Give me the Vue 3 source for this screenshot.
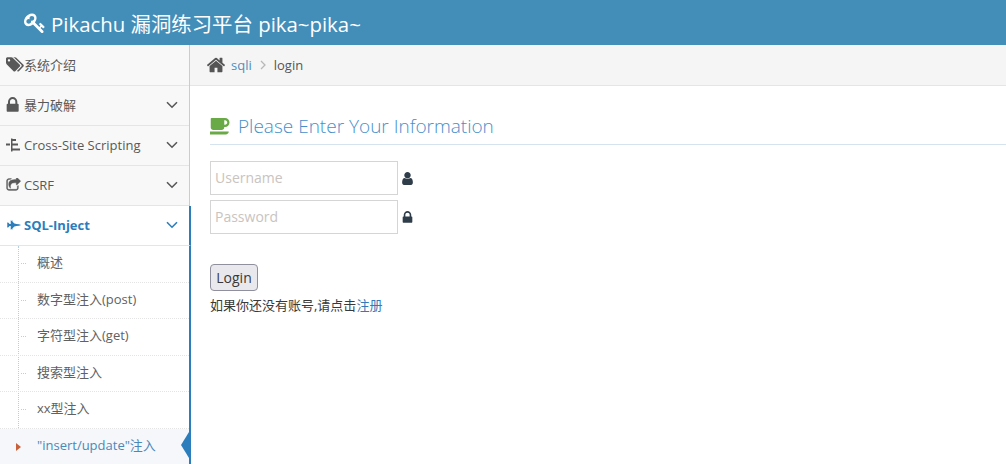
<template>
  <div class="page">
    <header class="navbar">
      <svg class="navbar-key" viewBox="0 0 1792 1792"><path :d="icons.key" /></svg>
      <span>Pikachu 漏洞练习平台 pika~pika~</span>
    </header>
    <div class="main">
      <aside class="sidebar">
        <div v-for="item in menu" :key="item.text" class="menu-item" :class="{ 'menu-item--open': item.open }">
          <svg v-if="item.icon === 'xss'" class="menu-icon" viewBox="0 0 18 14" preserveAspectRatio="xMinYMid">
            <path d="M0 5.500h4v2H0zM5 .5h1.500v13H5zM6.500 1h3.500v2H6.500zM6.500 5.500h5.500v2H6.500zM6.500 10.500h7.500v2H6.500z" />
          </svg>
          <svg v-else class="menu-icon" :class="`menu-icon--${item.icon}`" :viewBox="item.box" preserveAspectRatio="xMinYMid"><path :d="icons[item.icon]" /></svg>
          <span class="menu-text">{{ item.text }}</span>
          <svg v-if="item.arrow" class="menu-arrow" viewBox="0 0 12 8"><path d="M1 1.2l5 5 5-5" /></svg>
        </div>
        <ul class="submenu">
          <li v-for="sub in submenu" :key="sub.text" :class="{ active: sub.active }">{{ sub.text }}</li>
        </ul>
      </aside>
      <main class="content">
        <div class="breadcrumbs">
          <svg class="home-icon" viewBox="0 0 1792 1792"><path :d="icons.home" /></svg>
          <a class="crumb-link">sqli</a>
          <svg class="crumb-sep" viewBox="0 0 6 10"><path d="M1 1l4 4-4 4" /></svg>
          <span>login</span>
        </div>
        <div class="page-body">
          <h4 class="form-title">
            <svg class="coffee-icon" viewBox="0 0 2048 1792"><path :d="icons.coffee" /></svg>
            <span>Please Enter Your Information</span>
          </h4>
          <form class="login-form" @submit.prevent>
            <label class="field">
              <input type="text" placeholder="Username" />
              <svg class="field-icon" viewBox="0 0 1792 1792"><path :d="icons.user" /></svg>
            </label>
            <label class="field">
              <input type="password" placeholder="Password" />
              <svg class="field-icon" viewBox="0 0 1792 1792"><path :d="icons.lock" /></svg>
            </label>
            <button class="submit" type="submit">Login</button>
          </form>
          <p class="hint">如果你还没有账号,请点击<a>注册</a></p>
        </div>
      </main>
    </div>
  </div>
</template>

<script setup>
const icons = {
  key: 'M832 512q0-80-56-136t-136-56-136 56-56 136q0 42 19 83-41-19-83-19-80 0-136 56t-56 136 56 136 136 56 136-56 56-136q0-42-19-83 41 19 83 19 80 0 136-56t56-136zm851 704q0 17-49 66t-66 49q-9 0-28.500-16t-36.500-33-38.500-40-24.500-26l-96 96 220 220q28 28 28 68 0 42-39 81t-81 39q-40 0-68-28l-671-671q-176 131-365 131-163 0-265.500-102.500t-102.500-265.500q0-160 95-313t248-248 313-95q163 0 265.500 102.500t102.500 265.500q0 189-131 365l355 355 96-96q-3-3-26-24.500t-40-38.500-33-36.500-16-28.500q0-17 49-66t66-49q13 0 23 10 6 6 46 44.500t82 79.500 86.500 86 73 78 28.500 41z',
  tags: 'M448 448q0-53-37.500-90.500t-90.500-37.500-90.500 37.500-37.500 90.500 37.500 90.500 90.500 37.500 90.500-37.500 37.500-90.500zm1067 576q0 53-37 90l-491 492q-39 37-91 37-53 0-90-37l-715-716q-38-37-64.500-101t-26.500-117v-416q0-52 38-90t90-38h416q53 0 117 26.500t102 64.500l715 714q37 39 37 91zm384 0q0 53-37 90l-491 492q-39 37-91 37-36 0-59-14t-53-45l470-470q37-37 37-90 0-52-37-91l-715-714q-38-38-102-64.500t-117-26.500h224q53 0 117 26.500t102 64.500l715 714q37 39 37 91z',
  lock: 'M640 768h512v-192q0-106-75-181t-181-75-181 75-75 181v192zm832 96v576q0 40-28 68t-68 28h-960q-40 0-68-28t-28-68v-576q0-40 28-68t68-28h32v-192q0-184 132-316t316-132 316 132 132 316v192h32q40 0 68 28t28 68z',
  home: 'M1472 992v480q0 26-19 45t-45 19h-384v-384h-256v384h-384q-26 0-45-19t-19-45v-480q0-1 .5-3t.5-3l575-474 575 474q1 2 1 6zm223-69l-62 74q-8 9-21 11h-3q-13 0-21-7l-692-577-692 577q-12 8-24 7-13-2-21-11l-62-74q-8-10-7-23.500t11-21.500l719-599q32-26 76-26t76 26l244 204v-195q0-14 9-23t23-9h192q14 0 23 9t9 23v408l219 182q10 8 11 21.500t-7 23.500z',
  user: 'M1536 1399q0 109-62.500 187t-150.500 78h-854q-88 0-150.500-78t-62.500-187q0-85 8.500-160.500t31.500-152 58.500-131 94-89 134.500-34.500q131 128 313 128t313-128q76 0 134.500 34.500t94 89 58.500 131 31.500 152 8.500 160.500zm-256-887q0 159-112.500 271.500t-271.500 112.500-271.500-112.500-112.500-271.500 112.500-271.500 271.500-112.500 271.500 112.500 112.500 271.500z',
  coffee: 'M1472 640q0-80-56-136t-136-56h-64v384h64q80 0 136-56t56-136zm-1664 768h1792q0 106-75 181t-181 75h-1280q-106 0-181-75t-75-181zm1856-768q0 159-112.500 271.500t-271.500 112.500h-64v32q0 92-66 158t-158 66h-704q-92 0-158-66t-66-158v-736q0-26 19-45t45-19h1152q159 0 271.500 112.500t112.500 271.500z',
  share: 'M1472 989v259q0 119-84.500 203.500t-203.500 84.500h-832q-119 0-203.500-84.500t-84.500-203.500v-832q0-119 84.500-203.500t203.500-84.500h255q13 0 22.500 9.500t9.500 22.500q0 27-26 32-77 26-133 60-10 4-16 4h-112q-66 0-113 47t-47 113v832q0 66 47 113t113 47h832q66 0 113-47t47-113v-214q0-19 18-29 28-13 54-37 16-16 35-8 21 9 21 29zm237-496l-384 384q-18 19-45 19-12 0-25-5-39-17-39-59v-192h-160q-323 0-438 131-119 137-74 473 3 23-20 34-8 2-12 2-16 0-26-13-10-14-21-31t-39.500-68.500-49.500-99.500-38.500-114-17.500-122q0-49 3.500-91t14-90 28-88 47-81.500 68.500-74 94.500-61.500 124.500-48.500 159.500-30.500 196.500-11h160v-192q0-42 39-59 13-5 25-5 26 0 45 19l384 384q19 19 19 45t-19 45z',
  jet: 'M1920 896q-1 32-288 96l-352 32-224 64h-64l-293 352h69q26 0 45 4.500t19 11.500-19 11.500-45 4.500h-320v-32h64v-416h-160l-192 224h-96l-32-32v-192h32v-32h128v-8l-192-24v-128l192-24v-8h-128v-32h-32v-192l32-32h96l192 224h160v-416h-64v-32h320q26 0 45 4.500t19 11.500-19 11.500-45 4.500h-69l293 352h64l224 64 352 32q261 58 287 93z'
}

const menu = [
  { text: '系统介绍', icon: 'tags', box: '0 128 1920 1536' },
  { text: '暴力破解', icon: 'lock', box: '256 128 1280 1536', arrow: true },
  { text: 'Cross-Site Scripting', icon: 'xss', arrow: true },
  { text: 'CSRF', icon: 'share', box: '0 64 1792 1664', arrow: true },
  { text: 'SQL-Inject', icon: 'jet', box: '0 128 1920 1536', arrow: true, open: true }
]

const submenu = [
  { text: '概述' },
  { text: '数字型注入(post)' },
  { text: '字符型注入(get)' },
  { text: '搜索型注入' },
  { text: 'xx型注入' },
  { text: '"insert/update"注入', active: true }
]
</script>

<style>
html, body {
  margin: 0;
  overflow: hidden;
}
</style>

<style scoped>
.page {
  height: 464px;
  overflow: hidden;
  display: flex;
  flex-direction: column;
  font-family: "Open Sans", "Noto Sans CJK SC", sans-serif;
  font-size: 13px;
  color: #393939;
  background: #fff;
}

.navbar {
  height: 45px;
  flex: none;
  display: flex;
  align-items: center;
  gap: 5px;
  padding-left: 24px;
  background: #438eb9;
  color: #fff;
  font-size: 20.4px;
}

.navbar-key {
  width: 22px;
  height: 22px;
  fill: #fff;
}

.main {
  flex: 1;
  display: flex;
  min-height: 0;
}

.sidebar {
  position: relative;
  width: 190px;
  flex: none;
  box-sizing: border-box;
  padding-top: 1px;
  border-right: 1px solid #ccc;
  background: #f8f8f8;
}

.menu-item {
  height: 40px;
  box-sizing: border-box;
  display: flex;
  align-items: center;
  padding: 0 11px 2px 6px;
  background: #f8f8f8;
  border-bottom: 1px solid #e5e5e5;
  color: #585858;
}

.menu-item--open {
  background: #fff;
  color: #2b7dbc;
  font-weight: 700;
  margin-right: -2px;
  border-right: 2px solid #2b7dbc;
}

.menu-icon {
  width: 18px;
  height: 14px;
  fill: currentColor;
  flex: none;
}

.menu-icon--tags {
  height: 15px;
}

.menu-icon--lock {
  height: 16px;
}

.menu-icon--share {
  stroke: currentColor;
  stroke-width: 40;
}

.menu-icon--jet {
  width: 14px;
  height: 12px;
  margin: 0 3px 0 1px;
}

.menu-text {
  flex: 1;
  white-space: nowrap;
}

.menu-arrow {
  width: 12px;
  height: 8px;
  fill: none;
  stroke: currentColor;
  stroke-width: 1.6;
}

.submenu {
  list-style: none;
  margin: 0 -2px 0 0;
  padding: 0;
  background: #fff;
  border-right: 2px solid #2b7dbc;
  position: relative;
}

.submenu::before {
  content: "";
  position: absolute;
  left: 18px;
  top: 0;
  bottom: 0;
  border-left: 1px dotted #b5cfe3;
}

.submenu li {
  position: relative;
  height: 36.6px;
  box-sizing: border-box;
  padding-left: 37px;
  line-height: 33px;
  color: #616161;
  border-bottom: 1px dotted #e4e4e4;
  white-space: nowrap;
}

.submenu li::before {
  content: "";
  position: absolute;
  left: 21px;
  top: 17px;
  width: 5px;
  border-top: 1px dotted #b5cfe3;
}

.submenu li.active {
  color: #4b88b7;
  background: #f5f7fb;
}

.submenu li.active::before {
  left: 16px;
  top: 14px;
  width: 0;
  border-top: 4px solid transparent;
  border-bottom: 4px solid transparent;
  border-left: 5px solid #c86139;
}

.submenu li.active::after {
  content: "";
  position: absolute;
  right: 0;
  top: 3px;
  border-top: 13px solid transparent;
  border-bottom: 13px solid transparent;
  border-right: 8px solid #2b7dbc;
}

.content {
  flex: 1;
  min-width: 0;
}

.breadcrumbs {
  height: 41px;
  box-sizing: border-box;
  display: flex;
  align-items: center;
  padding-left: 16px;
  background: #f5f5f5;
  border-bottom: 1px solid #e5e5e5;
  color: #555;
}

.home-icon {
  width: 20px;
  height: 20px;
  fill: #555;
  margin-right: 5px;
}

.crumb-link {
  color: #4c8fbd;
}

.crumb-sep {
  width: 6px;
  height: 10px;
  margin: 0 8px;
  fill: none;
  stroke: #b8b8b8;
  stroke-width: 1.3;
}

.page-body {
  padding: 0 0 0 20px;
}

.form-title {
  display: flex;
  align-items: center;
  box-sizing: border-box;
  margin: 26px 0 16px;
  height: 33px;
  padding-bottom: 5px;
  border-bottom: 1px solid #d5e3ef;
  font-size: 19px;
  font-weight: 300;
  color: #478fca;
}

.coffee-icon {
  width: 24px;
  height: 21px;
  margin-right: 4px;
  fill: #69aa46;
}

.login-form {
  display: flex;
  flex-direction: column;
  align-items: flex-start;
  gap: 5px;
}

.field {
  display: flex;
  align-items: center;
  gap: 2px;
}

.field input {
  width: 188px;
  height: 34px;
  box-sizing: border-box;
  padding: 0 4px 2px;
  border: 1px solid #d5d5d5;
  outline: none;
  font: 14px "Open Sans", sans-serif;
}

.field input::placeholder {
  color: #c9c4c0;
}

.field-icon {
  width: 15px;
  height: 15px;
  fill: #2f3d4a;
}

.submit {
  width: 48px;
  height: 27px;
  margin-top: 25px;
  padding: 0;
  background: #e9e9ed;
  border: 1px solid #8f8f9d;
  border-radius: 4px;
  color: #393939;
  font: 14px "Open Sans", sans-serif;
}

.hint {
  margin: 4px 0 0;
  color: #393939;
}

.hint a {
  color: #337ab7;
}
</style>
